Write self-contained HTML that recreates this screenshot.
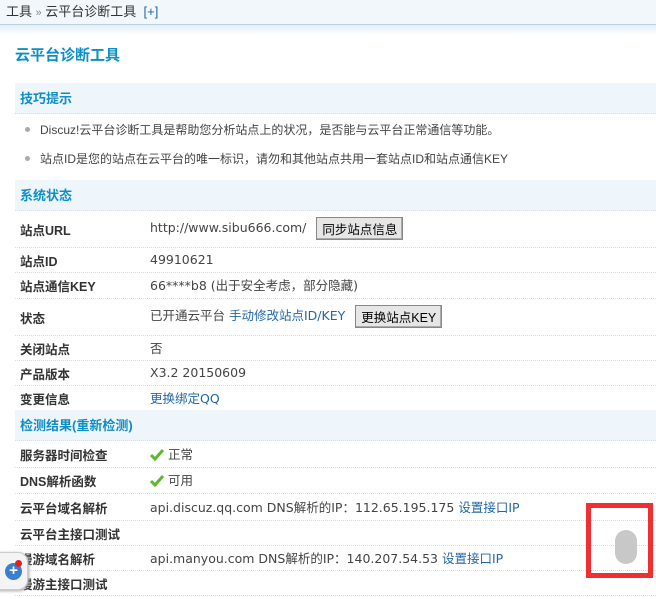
<!DOCTYPE html>
<html><head><meta charset="utf-8"><style>
*{margin:0;padding:0;box-sizing:border-box}
body{width:656px;height:599px;overflow:hidden;background:#fff;font:12px "Liberation Sans","Noto Sans CJK SC",sans-serif;color:#333;position:relative}
.top{height:25px;background:#f2f7fb;border-bottom:1px solid #b8d2e0;padding:0 6px;line-height:24px;font-size:13px;color:#333}
.top span{color:#2366a8;font-weight:normal}
.shadow{height:10px;background:linear-gradient(#e3eef5,#fff)}
h1{position:absolute;left:15px;top:44px;font-size:15px;color:#0e8ec7;font-weight:bold}
.sec{position:absolute;left:15px;right:0;background:#eef5fb;border-bottom:1px dotted #cfe0ec;color:#0e8ec7;font-weight:bold;font-size:13px;padding-left:5px}
.tip{position:absolute;left:25px;font-size:12px;color:#444}
.tip:before{content:"";position:absolute;left:0;top:6px;width:5px;height:5px;border-radius:50%;background:#aaa}
.tip b{font-weight:normal;padding-left:15px}
.row{position:absolute;left:15px;right:0;border-bottom:1px dotted #cfe0ec;display:flex;align-items:center}
.row .l{width:135px;padding-left:5px;font-weight:bold;font-size:12.5px;color:#333}
.row .v{font:12.5px "DejaVu Sans","Noto Sans CJK SC",sans-serif;color:#444;margin-top:-2px}
a{color:#2366a8;text-decoration:none}
.btn{display:inline-block;border:1px solid #888;background:#e6e6e6;padding:1px 5px;font:12.5px "Liberation Sans","Noto Sans CJK SC",sans-serif;color:#000;margin-left:10px;box-shadow:inset -1px -1px #aaa;vertical-align:middle}
.ck{display:inline-block;width:14px;height:12px;vertical-align:-2px;margin-right:4px}
</style></head><body>
<div class="top">工具 <small style="color:#888">»</small> 云平台诊断工具 &nbsp;<span>[+]</span></div>
<div class="shadow"></div>
<h1>云平台诊断工具</h1>
<div class="sec" style="top:83px;height:31px;line-height:31px">技巧提示</div>
<div class="tip" style="top:121px"><b>Discuz!云平台诊断工具是帮助您分析站点上的状况，是否能与云平台正常通信等功能。</b></div>
<div class="tip" style="top:150px"><b>站点ID是您的站点在云平台的唯一标识，请勿和其他站点共用一套站点ID和站点通信KEY</b></div>
<div class="sec" style="top:180px;height:31px;line-height:31px">系统状态</div>
<div class="row" style="top:211px;height:37px"><div class="l">站点URL</div><div class="v">http://www.sibu666.com/<span class="btn">同步站点信息</span></div></div>
<div class="row" style="top:248px;height:25px"><div class="l">站点ID</div><div class="v">49910621</div></div>
<div class="row" style="top:273px;height:26px"><div class="l">站点通信KEY</div><div class="v">66****b8 (出于安全考虑，部分隐藏)</div></div>
<div class="row" style="top:299px;height:37px"><div class="l">状态</div><div class="v">已开通云平台 <a>手动修改站点ID/KEY</a><span class="btn">更换站点KEY</span></div></div>
<div class="row" style="top:336px;height:25px"><div class="l">关闭站点</div><div class="v">否</div></div>
<div class="row" style="top:361px;height:25px"><div class="l">产品版本</div><div class="v">X3.2 20150609</div></div>
<div class="row" style="top:386px;height:24px;border:0"><div class="l">变更信息</div><div class="v"><a>更换绑定QQ</a></div></div>
<div class="sec" style="top:410px;height:31px;line-height:31px">检测结果(重新检测)</div>
<div class="row" style="top:441px;height:27px"><div class="l">服务器时间检查</div><div class="v"><svg class="ck" viewBox="0 0 14 12"><path d="M1 6l4 4 8-9" stroke="#5cb82e" stroke-width="3" fill="none"/></svg>正常</div></div>
<div class="row" style="top:468px;height:26px"><div class="l">DNS解析函数</div><div class="v"><svg class="ck" viewBox="0 0 14 12"><path d="M1 6l4 4 8-9" stroke="#5cb82e" stroke-width="3" fill="none"/></svg>可用</div></div>
<div class="row" style="top:494px;height:27px"><div class="l">云平台域名解析</div><div class="v">api.discuz.qq.com DNS解析的IP：112.65.195.175 <a>设置接口IP</a></div></div>
<div class="row" style="top:521px;height:25px"><div class="l">云平台主接口测试</div><div class="v"></div></div>
<div class="row" style="top:546px;height:25px"><div class="l">漫游域名解析</div><div class="v">api.manyou.com DNS解析的IP：140.207.54.53 <a>设置接口IP</a></div></div>
<div class="row" style="top:571px;height:25px"><div class="l">漫游主接口测试</div><div class="v"></div></div>
<div style="position:absolute;left:586px;top:503px;width:67px;height:75px;border:5px solid #f03030"></div>
<div style="position:absolute;left:615px;top:530px;width:22px;height:34px;border-radius:11px;background:#c8c8c8"></div>
<div style="position:absolute;left:-8px;top:552px;width:36px;height:38px;border-radius:0 10px 10px 0;background:#f4f4f4;border:1px solid #ccc;box-shadow:1px 1px 3px #aaa"></div>
<div style="position:absolute;left:5px;top:563px;width:17px;height:17px;border-radius:50%;background:#3a7fd0;color:#fff;font-weight:bold;font-size:15px;line-height:16px;text-align:center">+</div>
<div style="position:absolute;left:15px;top:560px;width:7px;height:7px;border-radius:50%;background:#d22"></div>
</body></html>
